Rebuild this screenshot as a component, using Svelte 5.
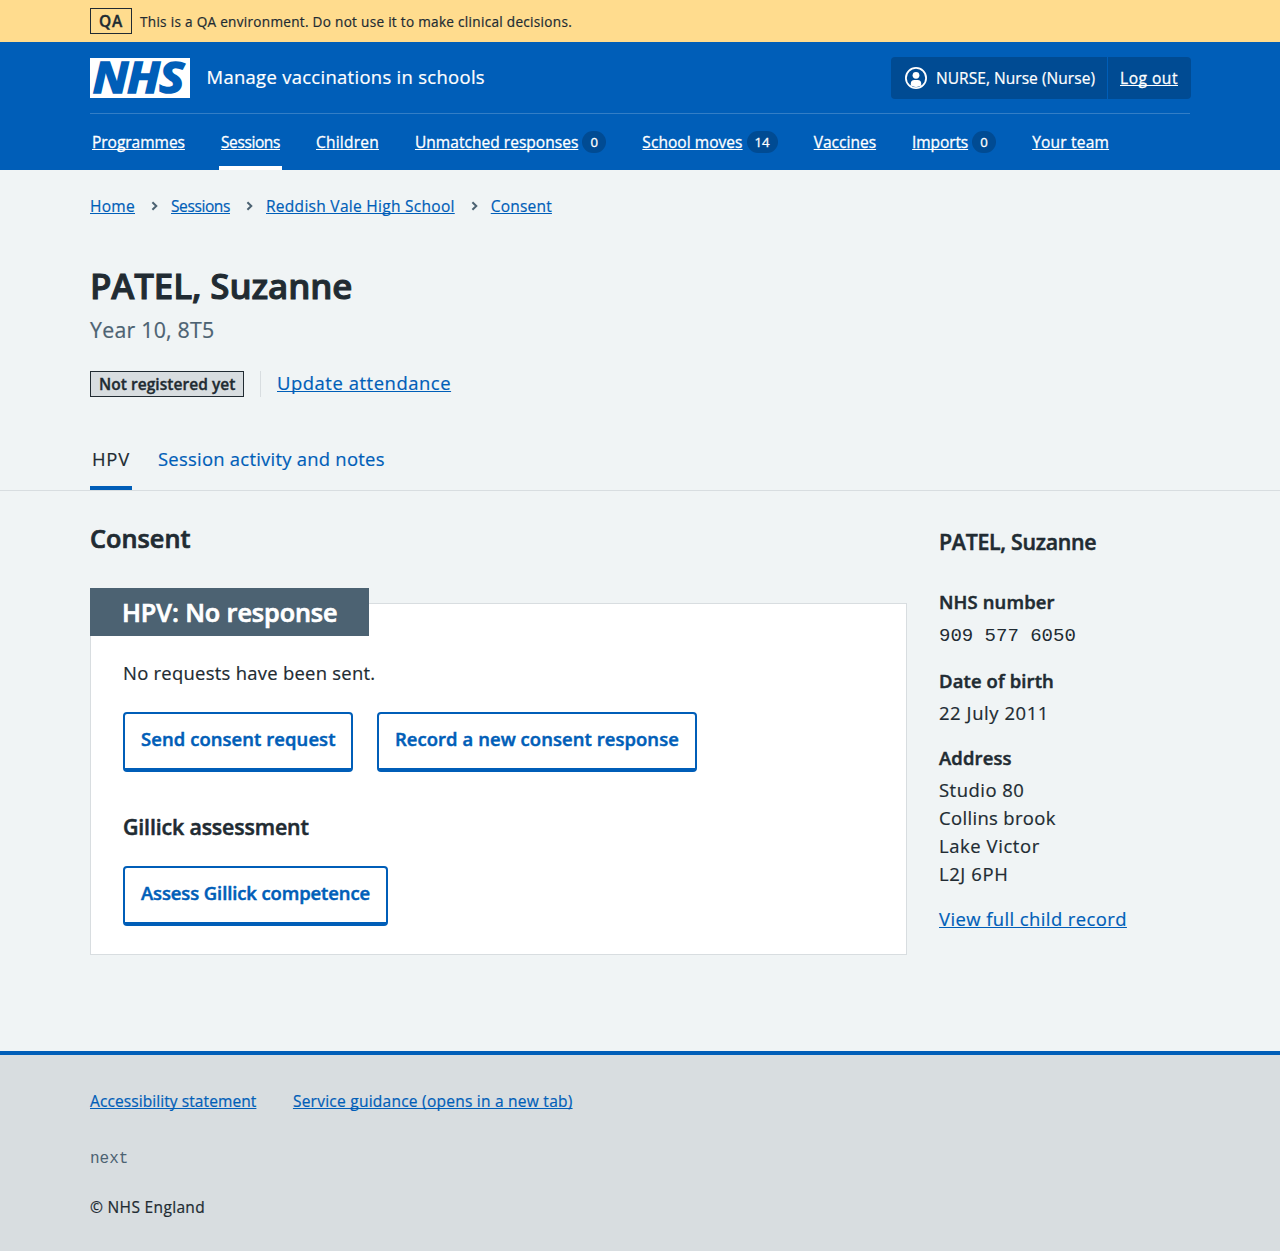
<script>
  const nav = [
    { label: 'Programmes', cls: 'n1' },
    { label: 'Sessions', cls: 'n2', current: true },
    { label: 'Children', cls: 'n3' },
    { label: 'Unmatched responses', cls: 'n4', count: 0 },
    { label: 'School moves', cls: 'n5', count: 14 },
    { label: 'Vaccines', cls: 'n6' },
    { label: 'Imports', cls: 'n7', count: 0 },
    { label: 'Your team', cls: 'n8' }
  ];
  const crumbs = [
    { label: 'Home', cls: 'c1' },
    { label: 'Sessions', cls: 'c2' },
    { label: 'Reddish Vale High School', cls: 'c3' },
    { label: 'Consent', cls: 'c4' }
  ];
  const address = [
    { line: 'Studio 80', cls: 'a1' },
    { line: 'Collins brook', cls: 'a2' },
    { line: 'Lake Victor', cls: 'a3' },
    { line: 'L2J 6PH', cls: 'a4' }
  ];
</script>

<div class="page">
  <div class="environment">
    <div class="container env-row">
      <strong class="tag env-tag">QA</strong>
      <span class="env-text">This is a QA environment. Do not use it to make clinical decisions.</span>
    </div>
  </div>

  <header>
    <div class="container">
      <div class="masthead">
        <svg class="logo" width="100" height="40" viewBox="0 0 100 40" role="img" aria-label="NHS">
          <rect width="100" height="40" fill="#fff" />
          <text class="logo-text" transform="scale(1.09 1)" x="2.6 34 63.6" y="35.4">NHS</text>
        </svg>
        <span class="service">Manage vaccinations in schools</span>
        <div class="account">
          <div class="user">
            <svg width="22" height="22" viewBox="0 0 22 22" aria-hidden="true">
              <circle cx="11" cy="11" r="10.1" fill="none" stroke="#fff" stroke-width="1.8" />
              <circle cx="11" cy="8.3" r="3.4" fill="#fff" />
              <path d="M5.8 18.6V16.4a3.5 3.5 0 0 1 3.5-3.5h3.4a3.5 3.5 0 0 1 3.5 3.5v2.2A9 9 0 0 1 11 20a9 9 0 0 1-5.2-1.4z" fill="#fff" />
            </svg>
            <span class="user-name">NURSE, Nurse (Nurse)</span>
          </div>
          <a class="logout" href="#logout">Log out</a>
        </div>
      </div>
      <nav>
        {#each nav as item}
          <div class="nav-item" class:current={item.current}>
            <a class={item.cls} href="#nav">{item.label}</a>
            {#if item.count !== undefined}<span class="count">{item.count}</span>{/if}
          </div>
        {/each}
      </nav>
    </div>
  </header>

  <div class="container intro">
    <div class="crumbs">
      {#each crumbs as crumb, i}
        {#if i > 0}
          <svg width="36" height="10" viewBox="0 0 36 10" aria-hidden="true">
            <path d="M17.4 1.2 21.3 5l-3.9 3.8" fill="none" stroke="#4c6272" stroke-width="2" />
          </svg>
        {/if}
        <a class={crumb.cls} href="#crumb">{crumb.label}</a>
      {/each}
    </div>
    <h1>PATEL, Suzanne</h1>
    <div class="caption">Year 10, 8T5</div>
    <div class="status">
      <strong class="tag status-tag">Not registered yet</strong>
      <div class="attendance"><a href="#attendance">Update attendance</a></div>
    </div>
  </div>

  <div class="tabs">
    <div class="container tab-row">
      <a class="tab active" href="#hpv">HPV</a>
      <a class="tab activity" href="#activity">Session activity and notes</a>
    </div>
  </div>

  <div class="container columns">
    <main>
      <h2>Consent</h2>
      <section class="card">
        <h3 class="card-heading">HPV: No response</h3>
        <p>No requests have been sent.</p>
        <div class="buttons">
          <button class="send">Send consent request</button>
          <button class="record">Record a new consent response</button>
        </div>
        <h4>Gillick assessment</h4>
        <div class="buttons">
          <button class="assess">Assess Gillick competence</button>
        </div>
      </section>
    </main>

    <aside>
      <h3 class="child">PATEL, Suzanne</h3>
      <dl>
        <dt class="d1">NHS number</dt>
        <dd class="number">909 577 6050</dd>
        <dt class="d2">Date of birth</dt>
        <dd class="date">22 July 2011</dd>
        <dt class="d3">Address</dt>
        <dd>
          {#each address as part}<div class={part.cls}>{part.line}</div>{/each}
        </dd>
      </dl>
      <a class="full" href="#record">View full child record</a>
    </aside>
  </div>

  <footer>
    <div class="container">
      <div class="foot-links">
        <a class="f1" href="#accessibility">Accessibility statement</a>
        <a class="f2" href="#guidance">Service guidance (opens in a new tab)</a>
      </div>
      <div class="version">next</div>
      <div class="copyright">© NHS England</div>
    </div>
  </footer>
</div>

<style>
  :global(body) {
    margin: 0;
    background: #d8dde0;
  }
  .page {
    min-height: 1251px;
    display: flex;
    flex-direction: column;
    background: #f0f4f5;
    color: #212b32;
    font-family: "Open Sans", "Noto Sans", sans-serif;
    font-size: 18.43px;
    line-height: 28px;
    -webkit-text-stroke: 0.2px currentColor;
  }
  .page * {
    box-sizing: border-box;
  }
  .container {
    width: 1100px;
    margin: 0 auto;
  }
  h1, h2, h3, h4, p, dl, dd {
    margin: 0;
  }
  h1, h2, h3, h4, dt, strong, button {
    font-weight: 600;
    -webkit-text-stroke: 0.5px currentColor;
  }
  a {
    color: #005eb8;
    white-space: nowrap;
    text-decoration-thickness: 1px;
    text-underline-offset: 1px;
    text-decoration-skip-ink: none;
    -webkit-text-stroke: 0.2px currentColor;
  }
  .tag {
    display: block;
    height: 26px;
    border: 1px solid #212b32;
    line-height: 25px;
    font-size: 15.52px;
    white-space: nowrap;
    -webkit-text-stroke: 0.35px currentColor;
  }

  .environment {
    height: 42px;
    background: #ffdc8e;
  }
  .env-row {
    display: flex;
    padding-top: 8px;
  }
  .env-tag {
    width: 42px;
    padding-left: 8px;
    letter-spacing: 0.8px;
  }
  .env-text {
    margin-left: 8px;
    font-size: 13.58px;
    line-height: 28px;
    letter-spacing: 0.29px;
  }

  header {
    height: 128px;
    background: #005eb8;
    color: #fff;
  }
  header a {
    color: #fff;
    -webkit-text-stroke-width: 0.3px;
  }
  .masthead {
    display: flex;
    align-items: center;
    height: 72px;
    border-bottom: 1px solid #337ec6;
  }
  .logo {
    overflow: visible;
  }
  .logo-text {
    font-family: "Open Sans", sans-serif;
    font-size: 43px;
    font-weight: 700;
    font-style: italic;
    fill: #005eb8;
    stroke: #005eb8;
    stroke-width: 1.7px;
  }
  .service {
    margin: -2px 0 0 16.5px;
    letter-spacing: 0.31px;
  }
  .account {
    display: flex;
    width: 300px;
    height: 42px;
    margin: 0 -1px 0 auto;
    border-radius: 4px;
    background: #004b93;
    font-size: 15.52px;
    line-height: 42px;
  }
  .user {
    display: flex;
    align-items: center;
    width: 217px;
    padding-left: 14px;
    border-right: 1px solid #005eb8;
    white-space: nowrap;
  }
  .user-name {
    margin-left: 9px;
    letter-spacing: 0.04px;
  }
  .logout {
    margin-left: 12px;
    letter-spacing: 0.53px;
  }
  nav {
    display: flex;
    gap: 32px;
    height: 56px;
    font-size: 15.52px;
  }
  .nav-item {
    display: flex;
    align-items: center;
    gap: 4px;
    height: 56px;
    padding: 4px 2px 0;
    border-bottom: 4px solid transparent;
  }
  .current {
    border-color: #fff;
  }
  .count {
    min-width: 24px;
    height: 22px;
    padding: 0 8px;
    border-radius: 11px;
    background: #004b93;
    font-size: 13.2px;
    line-height: 23px;
    text-align: center;
    -webkit-text-stroke-width: 0.3px;
  }
  .n1 { letter-spacing: -0.03px; }
  .n2 { letter-spacing: -0.39px; }
  .n3 { letter-spacing: 0.22px; }
  .n4 { letter-spacing: 0.03px; }
  .n5 { letter-spacing: 0.05px; }
  .n6 { letter-spacing: 0.02px; }
  .n7 { letter-spacing: -0.11px; }
  .n8 { letter-spacing: 0.2px; }

  .intro {
    height: 261px;
    padding-top: 24px;
  }
  .crumbs {
    display: flex;
    align-items: center;
    height: 24px;
    font-size: 15.52px;
    line-height: 24px;
  }
  .c1 { letter-spacing: 0.29px; }
  .c2 { letter-spacing: -0.4px; }
  .c3 { letter-spacing: 0.28px; }
  .c4 { letter-spacing: 0.2px; }
  h1 {
    margin-top: 46px;
    font-size: 34.92px;
    line-height: 44px;
    letter-spacing: -0.13px;
    -webkit-text-stroke: 1px currentColor;
  }
  .caption {
    margin-top: 7px;
    color: #4c6272;
    font-size: 21.34px;
    line-height: 30px;
    letter-spacing: 0.24px;
  }
  .status {
    display: flex;
    margin-top: 26px;
  }
  .status-tag {
    width: 154px;
    padding-left: 8px;
    background: #d8dde0;
    letter-spacing: 0.04px;
  }
  .attendance {
    height: 26px;
    margin-left: 16px;
    padding-left: 16px;
    border-left: 1px solid #d8dde0;
    line-height: 23px;
    letter-spacing: 0.54px;
  }

  .tabs {
    height: 60px;
    border-bottom: 1px solid #d8dde0;
  }
  .tab-row {
    display: flex;
    gap: 24px;
  }
  .tab {
    height: 59px;
    padding: 0 2px;
    border-bottom: 4px solid transparent;
    line-height: 56px;
    text-decoration: none;
    letter-spacing: 0.25px;
  }
  .active {
    border-color: #005eb8;
    color: #212b32;
    letter-spacing: 0.78px;
  }

  .columns {
    display: grid;
    grid-template-columns: 817px 1fr;
    column-gap: 32px;
    height: 560px;
  }
  h2 {
    margin-top: 29px;
    font-size: 25.22px;
    line-height: 36px;
    letter-spacing: 0.05px;
    -webkit-text-stroke-width: 0.7px;
  }
  .card {
    display: flex;
    flex-direction: column;
    align-items: flex-start;
    height: 352px;
    margin-top: 47px;
    padding: 0 32px;
    border: 1px solid #d8dde0;
    background: #fff;
  }
  .card-heading {
    width: 279px;
    height: 48px;
    margin: -16px 0 0 -33px;
    padding-left: 32px;
    background: #4c6272;
    color: #fff;
    font-size: 25.22px;
    line-height: 48px;
    letter-spacing: -0.09px;
    -webkit-text-stroke-width: 0.7px;
  }
  .card p {
    margin-top: 23px;
    letter-spacing: 0.27px;
  }
  .buttons {
    display: flex;
    gap: 24px;
    margin-top: 25px;
  }
  button {
    height: 60px;
    padding: 0 0 4px 16px;
    border: 2px solid #005eb8;
    border-bottom-width: 4px;
    border-radius: 4px;
    background: #fff;
    color: #005eb8;
    font-family: inherit;
    font-size: 18.43px;
    line-height: 50px;
    text-align: left;
    white-space: nowrap;
  }
  .send {
    width: 230px;
    letter-spacing: 0.09px;
  }
  .record {
    width: 320px;
    letter-spacing: 0.08px;
  }
  .assess {
    width: 265px;
    letter-spacing: -0.09px;
  }
  h4 {
    margin-top: 39px;
    font-size: 21.34px;
    line-height: 32px;
    letter-spacing: -0.15px;
  }
  h4 + .buttons {
    margin-top: 23px;
  }

  aside {
    padding-top: 35px;
  }
  .child {
    font-size: 21.34px;
    line-height: 32px;
    letter-spacing: -0.29px;
  }
  dl {
    margin-top: 30px;
  }
  dt {
    margin-bottom: 4px;
  }
  dd {
    margin-bottom: 17px;
  }
  .number {
    padding-top: 2px;
    font-family: "Liberation Mono", monospace;
    font-size: 19px;
    -webkit-text-stroke: 0;
  }
  .d1 { letter-spacing: 0.14px; }
  .d2 { letter-spacing: 0.14px; }
  .d3 { letter-spacing: 0.16px; }
  .date { letter-spacing: 0.59px; }
  .a1 { letter-spacing: 0.5px; }
  .a2 { letter-spacing: 0.35px; }
  .a3 { letter-spacing: 0.59px; }
  .a4 { letter-spacing: 0.61px; }
  .full { letter-spacing: 0.42px; }

  footer {
    flex: 1;
    padding-top: 34px;
    border-top: 4px solid #005eb8;
    background: #d8dde0;
    font-size: 15.52px;
    line-height: 24px;
  }
  .foot-links {
    display: flex;
    gap: 36.5px;
  }
  .f1 { letter-spacing: 0.08px; }
  .f2 { letter-spacing: 0.24px; }
  .version {
    margin-top: 34px;
    color: #4c6272;
    font-family: "Liberation Mono", monospace;
    font-size: 16px;
    -webkit-text-stroke: 0;
  }
  .copyright {
    margin-top: 24px;
    letter-spacing: 0.33px;
  }
</style>
